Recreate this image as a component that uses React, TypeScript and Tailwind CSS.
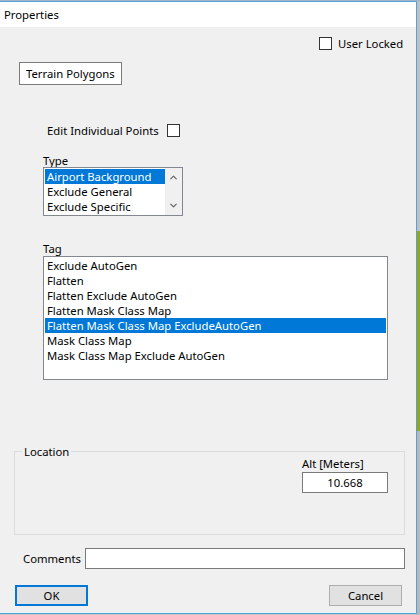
import { ChevronUp, ChevronDown } from "lucide-react";

const typeItems = ["Airport Background", "Exclude General", "Exclude Specific"];
const tagItems = [
  "Exclude AutoGen",
  "Flatten",
  "Flatten Exclude AutoGen",
  "Flatten Mask Class Map",
  "Flatten Mask Class Map ExcludeAutoGen",
  "Mask Class Map",
  "Mask Class Map Exclude AutoGen",
];

function Check({ className = "" }: { className?: string }) {
  return <div className={`w-[13px] h-[13px] border border-[#333] bg-white ${className}`} />;
}

export default function App() {
  return (
    <div
      className="w-[420px] h-[615px] flex flex-col bg-[#c8c8c8] overflow-hidden text-[11.3px] leading-[15px] text-black"
      style={{ fontFamily: '"Noto Sans", "Liberation Sans", sans-serif' }}
    >
      {/* strip of the app behind */}
      <div className="h-[1px] w-full bg-[#a9b4c0]" />
      <div className="flex flex-1">
        {/* Dialog window */}
        <div className="w-[417px] h-[613px] flex flex-col border-t border-r border-b border-[#4aa3e2]">
          {/* Title bar */}
          <div className="h-[25px] bg-white flex items-center pl-[4px] pb-[1px]">Properties</div>

          {/* Body */}
          <div className="flex-1 bg-[#f0f0f0] flex flex-col">
            {/* User Locked */}
            <div className="flex items-center pl-[319px] mt-[10px] h-[13px]">
              <Check />
              <span className="ml-[6px]">User Locked</span>
            </div>

            {/* Terrain Polygons */}
            <div className="mt-[12px] ml-[19px] w-[103px] h-[23px] border border-[#7a7a7a] bg-white flex items-center pl-[6px]">
              Terrain Polygons
            </div>

            {/* Edit Individual Points */}
            <div className="mt-[39px] ml-[47px] flex items-center h-[13px]">
              <span>Edit Individual Points</span>
              <Check className="ml-[8px]" />
            </div>

            {/* Type */}
            <div className="mt-[16px] ml-[43px]">Type</div>
            <div className="mt-[-1px] ml-[43px] w-[140px] h-[49px] border border-[#828790] bg-white flex">
              <div className="flex-1 flex flex-col pt-[1px] pl-[1px]">
                {typeItems.map((t, i) => (
                  <div
                    key={t}
                    className={`h-[15px] pl-[2px] ${i === 0 ? "bg-[#0078d7] text-white" : ""}`}
                  >
                    {t}
                  </div>
                ))}
              </div>
              <div className="w-[17px] bg-[#f0f0f0] flex flex-col items-center justify-between py-[4px]">
                <ChevronUp size={11} strokeWidth={2.5} className="text-[#606060]" />
                <ChevronDown size={11} strokeWidth={2.5} className="text-[#606060]" />
              </div>
            </div>

            {/* Tag */}
            <div className="mt-[25px] ml-[43px]">Tag</div>
            <div className="ml-[43px] w-[345px] h-[124px] border border-[#828790] bg-white flex flex-col pt-[1px] px-[1px]">
              {tagItems.map((t, i) => (
                <div
                  key={t}
                  className={`h-[15px] pl-[2px] ${i === 4 ? "bg-[#0078d7] text-white" : ""}`}
                >
                  {t}
                </div>
              ))}
            </div>

            {/* Location group */}
            <div className="mt-[71px] ml-[14px] w-[391px] h-[84px] border border-[#dcdcdc] flex flex-col">
              <div className="ml-[7px] mt-[-8px] px-[2px] bg-[#f0f0f0] self-start">Location</div>
              <div className="ml-[287px] mt-[-3px]">Alt [Meters]</div>
              <div className="ml-[287px] mt-[1px] w-[86px] h-[21px] border border-[#7a7a7a] bg-white flex items-center justify-center">
                10.668
              </div>
            </div>

            {/* Comments */}
            <div className="mt-[13px] flex items-center h-[21px]">
              <span className="ml-[23px] w-[62px]">Comments</span>
              <div className="w-[320px] h-[21px] border border-[#7a7a7a] bg-white" />
            </div>

            {/* Buttons */}
            <div className="mt-[16px] flex justify-between pl-[15px] pr-[14px]">
              <button className="w-[73px] h-[21px] border-2 border-[#0078d7] bg-[#e1e1e1] flex items-center justify-center">
                OK
              </button>
              <button className="w-[73px] h-[21px] border border-[#adadad] bg-[#e1e1e1] flex items-center justify-center">
                Cancel
              </button>
            </div>
          </div>
        </div>

        {/* right strip of the app behind */}
        <div className="flex-1 flex flex-col">
          <div className="h-[230px] bg-[#c0c0c0]" />
          <div className="h-[200px] bg-[#9aa31c]" />
          <div className="flex-1 bg-[#b8b8b8]" />
        </div>
      </div>
    </div>
  );
}
